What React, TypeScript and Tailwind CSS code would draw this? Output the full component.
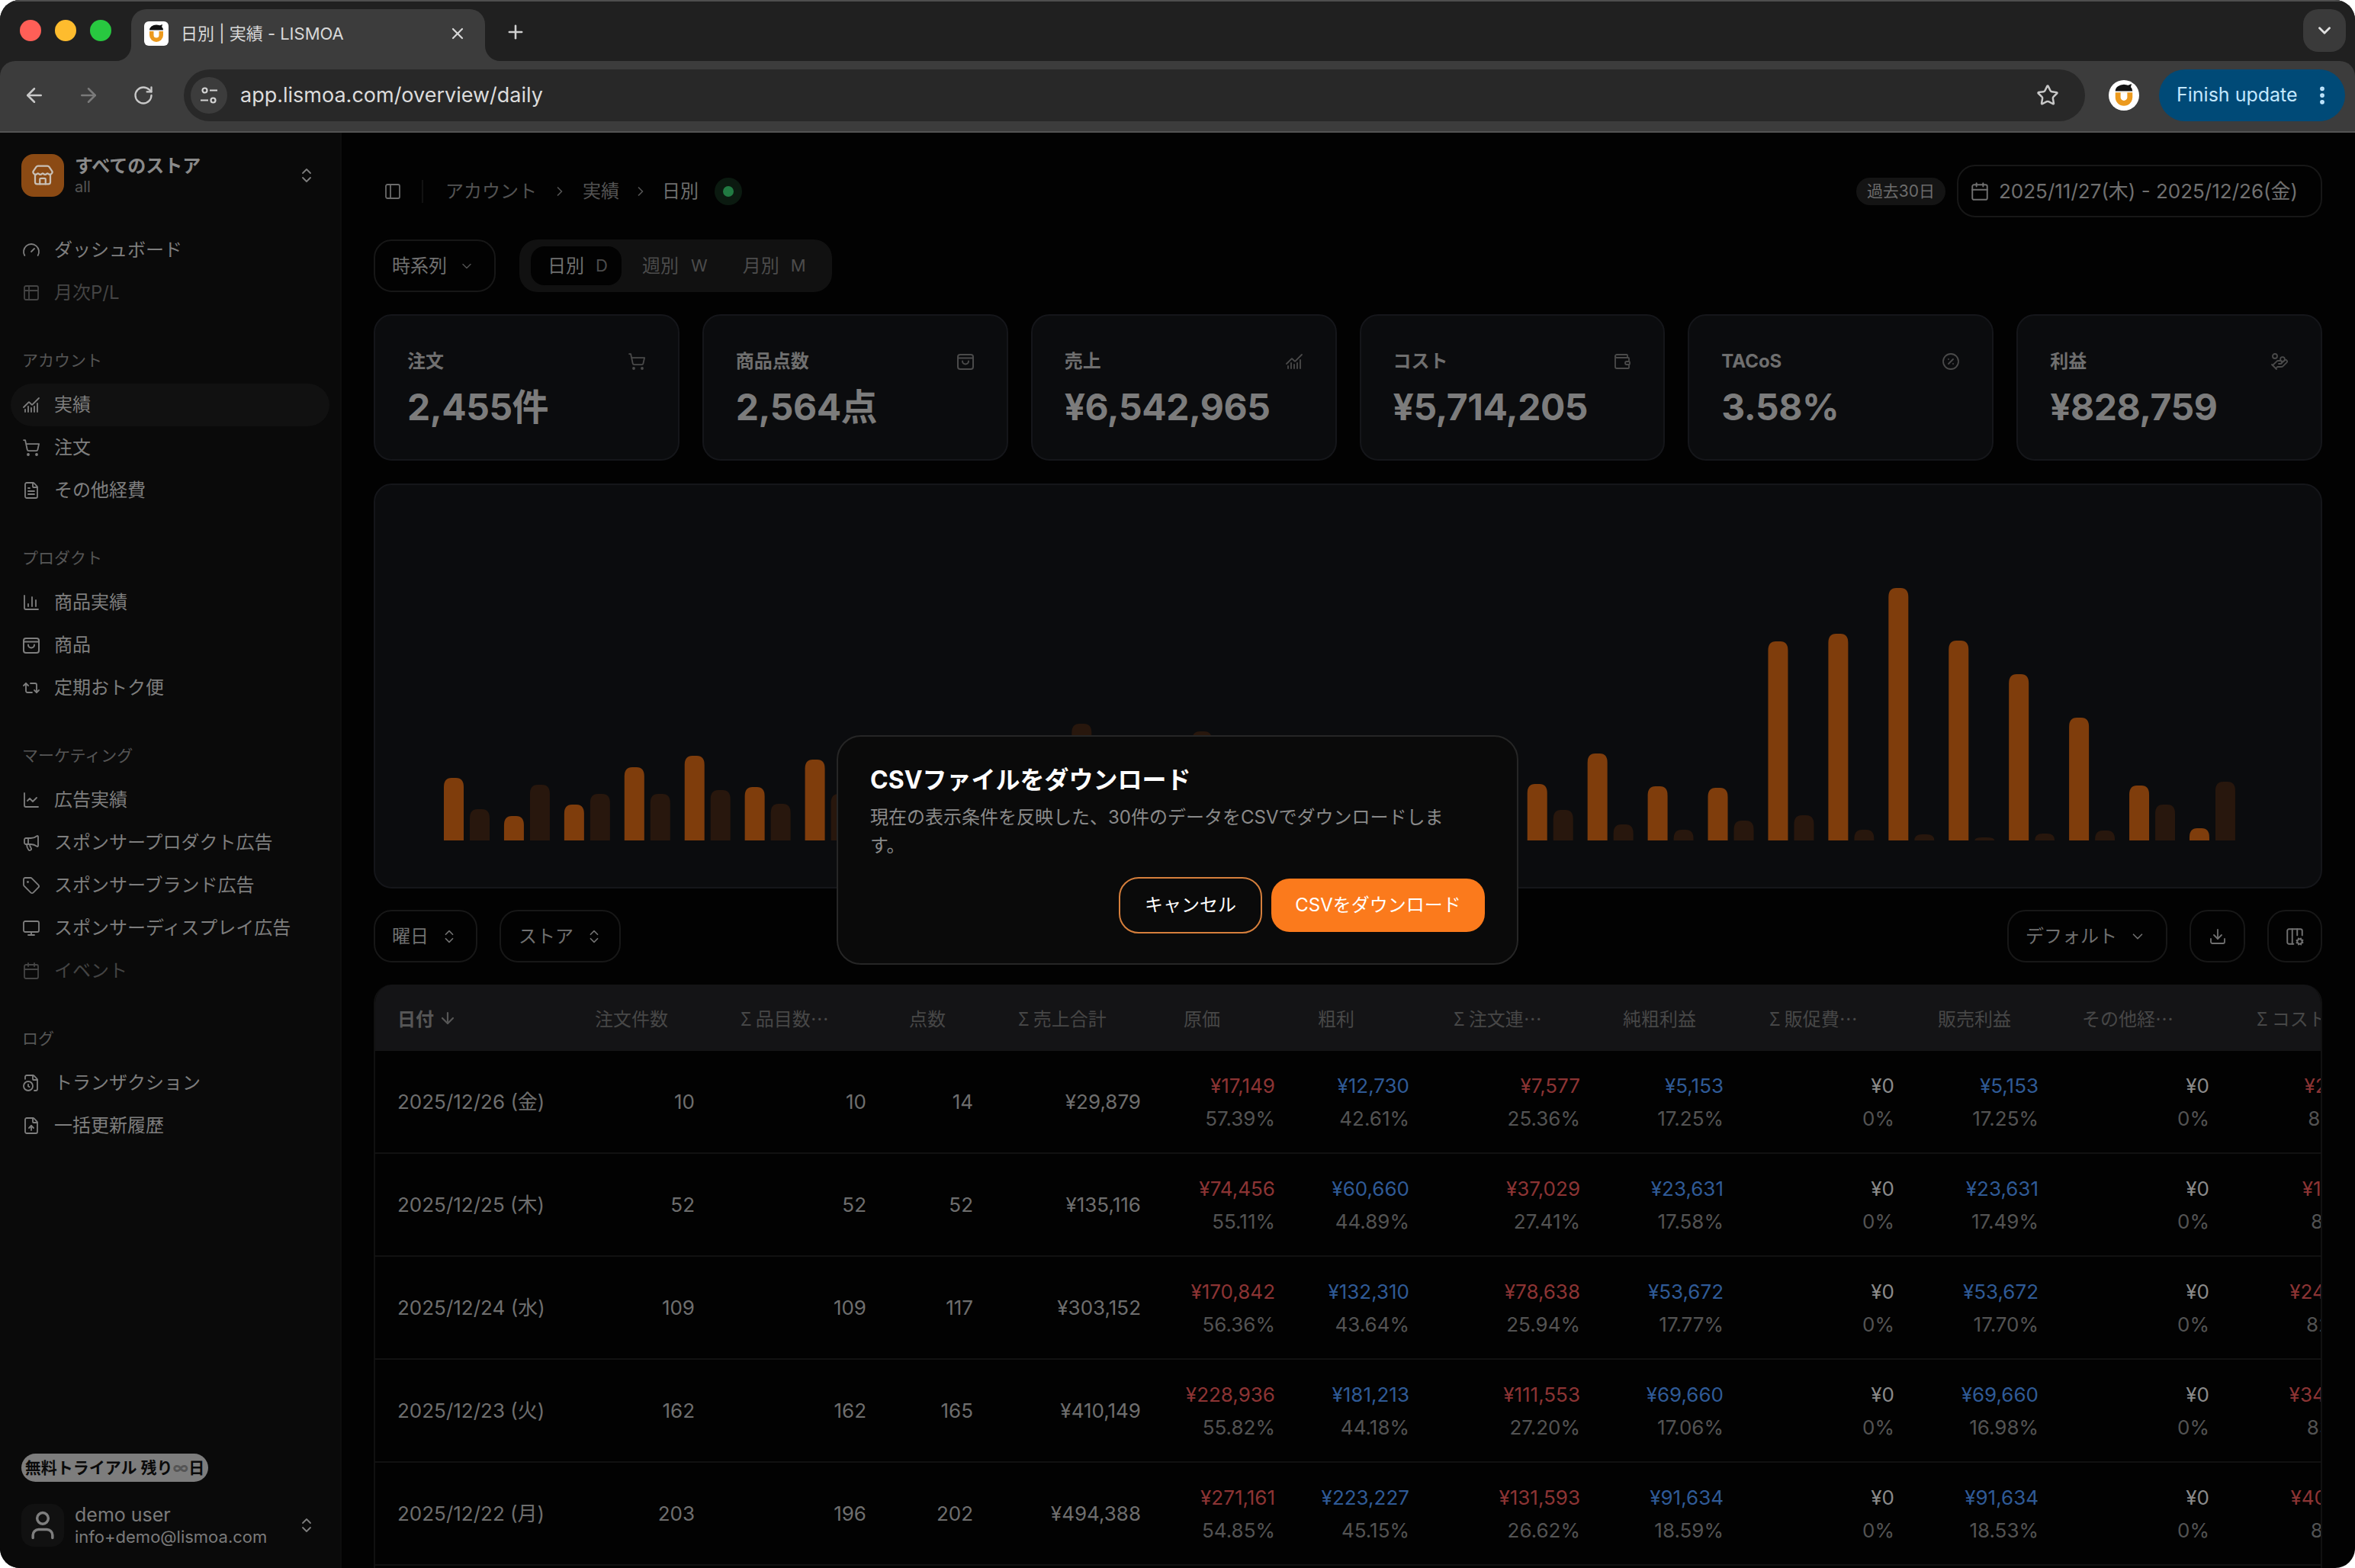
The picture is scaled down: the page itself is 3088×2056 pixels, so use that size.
import React from "react";
import {
  ArrowDown, ArrowLeft, ArrowRight, Calendar, ChartColumn, ChartLine, ChartNoAxesCombined, ChevronDown, ChevronRight,
  ChevronsUpDown, CirclePercent, Columns3Cog, Download, EllipsisVertical, FileClock, FileText, FileUp, Gauge, HandCoins,
  Megaphone, Monitor, PanelLeft, Plus, Repeat2, RotateCw, ShoppingCart, Star, Store, Table2, Tag, User, Wallet, X,
} from "lucide-react";

function BagIcon({ size = 24, className = "" }: { size?: number; className?: string }) {
  return (
    <svg width={size} height={size} viewBox="0 0 24 24" fill="none" stroke="currentColor" strokeWidth="2" strokeLinecap="round" strokeLinejoin="round" className={className}>
      <rect x="2" y="3" width="20" height="19" rx="3" />
      <path d="M2 7.5h20" />
      <path d="M8 11.5a4 4 0 0 0 8 0" />
    </svg>
  );
}

function Favicon({ size, round }: { size: number; round?: boolean }) {
  return (
    <svg width={size} height={size} viewBox="0 0 32 32" className="shrink-0">
      {round ? <circle cx="16" cy="16" r="16" fill="#fff" /> : <rect width="32" height="32" rx="6" fill="#fff" />}
      <path d="M7 11.5 A9 7 0 0 1 25 11.5 Z" fill="#111" />
      <path d="M19 6l5-2-1 4z" fill="#111" />
      <path d="M7 13h18v5a9 9 0 0 1-18 0z" fill="#ec9a1e" />
      <path d="M12.5 13h7v5a3.5 3.5 0 0 1-7 0z" fill="#fff" />
    </svg>
  );
}

function TabFlare({ side }: { side: "l" | "r" }) {
  return (
    <svg width="20" height="20" viewBox="0 0 20 20" className={side === "l" ? "absolute bottom-0 -left-[20px]" : "absolute bottom-0 -right-[20px]"}>
      <path d={side === "l" ? "M20 0V20H0A20 20 0 0 0 20 0Z" : "M0 0V20H20A20 20 0 0 1 0 0Z"} fill="#3c3c3c" />
    </svg>
  );
}

function BrowserChrome() {
  return (
    <div className="shrink-0 bg-[#202020] border-t-2 border-[#4e4e4e]">
      <div className="h-[78px] flex items-start relative">
        <div className="flex items-center gap-[18px] pl-[26px] pt-[24px]">
          <div className="w-[28px] h-[28px] rounded-full bg-[#ff5f57]" />
          <div className="w-[28px] h-[28px] rounded-full bg-[#febc2e]" />
          <div className="w-[28px] h-[28px] rounded-full bg-[#28c840]" />
        </div>
        <div className="relative ml-[26px] mt-[10px] w-[464px] h-[68px] rounded-t-[20px] bg-[#3c3c3c] flex items-center pl-[17px] pr-[24px] pb-[4px]">
          <TabFlare side="l" />
          <TabFlare side="r" />
          <Favicon size={32} />
          <span className="ml-[16px] text-[22px] text-[#d8d8d8] flex-1 whitespace-nowrap">日別 | 実績 - LISMOA</span>
          <X size={24} strokeWidth={2.2} className="text-[#d8d8d8]" />
        </div>
        <Plus size={28} strokeWidth={2.2} className="ml-[26px] mt-[26px] text-[#d0d0d0]" />
        <div className="ml-auto mr-[12px] mt-[10px] w-[56px] h-[56px] rounded-[20px] bg-[#3a3a3a] flex items-center justify-center">
          <ChevronDown size={26} strokeWidth={2.6} className="text-[#e0e0e0]" />
        </div>
      </div>
      <div className="h-[94px] rounded-t-[20px] bg-[#3c3c3c] border-b-2 border-[#545454] flex items-center pl-[30px] pr-[13px] pb-[2px]">
        <ArrowLeft size={30} strokeWidth={2} className="text-[#c8c8c8]" />
        <ArrowRight size={30} strokeWidth={2} className="ml-[41px] text-[#7a7a7a]" />
        <RotateCw size={28} strokeWidth={2} className="ml-[43px] text-[#c8c8c8]" />
        <div className="ml-[39px] flex-1 h-[68px] rounded-full bg-[#282828] flex items-center pl-[9px] pr-[34px]">
          <div className="w-[48px] h-[48px] rounded-full bg-[#3c3c3c] flex items-center justify-center">
            <svg width="26" height="26" viewBox="0 0 26 26" fill="none" stroke="#d4d4d4" strokeWidth="2.2">
              <circle cx="7.5" cy="6.5" r="3" />
              <path d="M14 6.5h10M2 19.5h10" />
              <circle cx="18.5" cy="19.5" r="3" />
            </svg>
          </div>
          <span className="ml-[17px] text-[27px] text-[#dcdcdc] flex-1">app.lismoa.com/overview/daily</span>
          <Star size={30} strokeWidth={2} className="text-[#c8c8c8]" />
        </div>
        <div className="ml-[31px]"><Favicon size={40} round /></div>
        <div className="ml-[26px] w-[244px] h-[68px] rounded-full bg-[#004a77] flex items-center pl-[23px] pr-[15px] justify-between">
          <span className="text-[25px] text-[#c2e7ff] whitespace-nowrap">Finish update</span>
          <EllipsisVertical size={30} strokeWidth={2.6} className="text-[#c2e7ff]" />
        </div>
      </div>
    </div>
  );
}

type NavItem = { label: string; icon: React.ReactNode; active?: boolean; disabled?: boolean };

function NavRow({ item }: { item: NavItem }) {
  return (
    <div className={
      "h-[56px] mx-[14px] rounded-full pl-[15px] flex items-center gap-[18px] text-[24px] whitespace-nowrap " +
      (item.active ? "bg-[#111111] " : "") + (item.disabled ? "text-[#444444]" : "text-[#7e7e7e]")
    }>
      {item.icon}
      <span>{item.label}</span>
    </div>
  );
}

function NavGroup({ title, items }: { title: string; items: NavItem[] }) {
  return (
    <div className="mt-[41px]">
      <div className="h-[40px] mb-[10px] pl-[29px] flex items-center text-[21px] text-[#565656]">{title}</div>
      {items.map((i) => <NavRow key={i.label} item={i} />)}
    </div>
  );
}

const ic = { size: 24, strokeWidth: 1.8 };

function Sidebar() {
  return (
    <aside className="w-[448px] shrink-0 bg-[#0a0a0a] border-r-2 border-[#0d0d0d] flex flex-col">
      <div className="mt-[28px] h-[56px] pl-[28px] pr-[32px] flex items-center">
        <div className="w-[56px] h-[56px] rounded-[16px] bg-[#8b4a14] flex items-center justify-center">
          <Store size={30} strokeWidth={1.8} className="text-[#c9c0b6]" />
        </div>
        <div className="ml-[14px] flex-1">
          <div className="text-[24px] leading-[30px] font-bold text-[#8a8a8a]">すべてのストア</div>
          <div className="text-[20px] leading-[24px] text-[#555555]">all</div>
        </div>
        <ChevronsUpDown size={24} strokeWidth={1.8} className="text-[#7e7e7e]" />
      </div>
      <div className="mt-[42px]">
        <NavRow item={{ label: "ダッシュボード", icon: <Gauge {...ic} /> }} />
        <NavRow item={{ label: "月次P/L", icon: <Table2 {...ic} />, disabled: true }} />
      </div>
      <NavGroup title="アカウント" items={[
        { label: "実績", icon: <ChartNoAxesCombined {...ic} />, active: true },
        { label: "注文", icon: <ShoppingCart {...ic} /> },
        { label: "その他経費", icon: <FileText {...ic} /> },
      ]} />
      <NavGroup title="プロダクト" items={[
        { label: "商品実績", icon: <ChartColumn {...ic} /> },
        { label: "商品", icon: <BagIcon /> },
        { label: "定期おトク便", icon: <Repeat2 {...ic} /> },
      ]} />
      <NavGroup title="マーケティング" items={[
        { label: "広告実績", icon: <ChartLine {...ic} /> },
        { label: "スポンサープロダクト広告", icon: <Megaphone {...ic} /> },
        { label: "スポンサーブランド広告", icon: <Tag {...ic} /> },
        { label: "スポンサーディスプレイ広告", icon: <Monitor {...ic} /> },
        { label: "イベント", icon: <Calendar {...ic} />, disabled: true },
      ]} />
      <NavGroup title="ログ" items={[
        { label: "トランザクション", icon: <FileClock {...ic} /> },
        { label: "一括更新履歴", icon: <FileUp {...ic} /> },
      ]} />
      <div className="mt-auto pb-[28px] pl-[28px] pr-[32px]">
        <div className="h-[37px] w-[245px] rounded-full bg-[#7d7d7d] flex items-center justify-center text-[21px] font-bold text-[#0a0a0a] whitespace-nowrap">
          無料トライアル 残り<span className="text-[#555555]">∞</span>日
        </div>
        <div className="mt-[29px] flex items-center h-[56px]">
          <div className="w-[56px] h-[56px] rounded-[16px] bg-[#111111] flex items-center justify-center">
            <User size={44} strokeWidth={1.9} className="text-[#7e7e7e]" />
          </div>
          <div className="ml-[14px] flex-1">
            <div className="text-[25px] leading-[29px] text-[#7a7a7a]">demo user</div>
            <div className="text-[22px] leading-[28px] text-[#7a7a7a]">info+demo@lismoa.com</div>
          </div>
          <ChevronsUpDown size={24} strokeWidth={1.8} className="text-[#7e7e7e]" />
        </div>
      </div>
    </aside>
  );
}

function PageHeader() {
  return (
    <div className="h-[69px] flex items-center justify-between">
      <div className="flex items-center pl-[13px] text-[24px] text-[#545454]">
        <PanelLeft size={24} strokeWidth={1.8} className="text-[#6a6a6a]" />
        <div className="ml-[26px] w-[2px] h-[30px] bg-[#121212]" />
        <span className="ml-[29px]">アカウント</span>
        <ChevronRight size={20} className="mx-[20px]" />
        <span>実績</span>
        <ChevronRight size={20} className="mx-[18px]" />
        <span className="text-[#707070]">日別</span>
        <div className="ml-[21px] w-[36px] h-[36px] rounded-full bg-[#0b1a10] flex items-center justify-center">
          <div className="w-[14px] h-[14px] rounded-full bg-[#217a42]" />
        </div>
      </div>
      <div className="flex items-center gap-[15px]">
        <div className="h-[36px] w-[117px] rounded-full bg-[#141414] flex items-center justify-center text-[21px] text-[#6c6c6c]">過去30日</div>
        <div className="h-[69px] w-[479px] rounded-[24px] border-2 border-[#171717] flex items-center pl-[15px] gap-[12px] text-[26px] text-[#707070] whitespace-nowrap">
          <Calendar size={26} strokeWidth={1.8} />
          2025/11/27(木) - 2025/12/26(金)
        </div>
      </div>
    </div>
  );
}

function ViewRow() {
  return (
    <div className="mt-[29px] h-[69px] flex items-center gap-[31px]">
      <div className="h-[69px] w-[160px] rounded-[24px] border-2 border-[#171717] flex items-center pl-[22px] gap-[16px] text-[24px] text-[#707070]">
        時系列 <ChevronDown size={20} strokeWidth={1.8} className="text-[#505050]" />
      </div>
      <div className="h-[69px] w-[410px] rounded-[24px] bg-[#111111] flex items-center pl-[15px] text-[24px] text-[#4c4c4c] whitespace-nowrap">
        <div className="h-[51px] w-[119px] rounded-[18px] bg-[#020202] flex items-center pl-[22px] text-[#707070]">
          日別<span className="ml-[15px] text-[22px] text-[#4c4c4c]">D</span>
        </div>
        <span className="ml-[27px]">週別</span><span className="ml-[16px] text-[22px]">W</span>
        <span className="ml-[46px]">月別</span><span className="ml-[15px] text-[22px]">M</span>
      </div>
    </div>
  );
}

const cards = [
  { label: "注文", value: "2,455件", icon: <ShoppingCart size={24} strokeWidth={1.8} /> },
  { label: "商品点数", value: "2,564点", icon: <BagIcon /> },
  { label: "売上", value: "¥6,542,965", icon: <ChartNoAxesCombined size={24} strokeWidth={1.8} /> },
  { label: "コスト", value: "¥5,714,205", icon: <Wallet size={24} strokeWidth={1.8} /> },
  { label: "TACoS", value: "3.58%", icon: <CirclePercent size={24} strokeWidth={1.8} /> },
  { label: "利益", value: "¥828,759", icon: <HandCoins size={24} strokeWidth={1.8} /> },
];

function StatCards() {
  return (
    <div className="mt-[29px] grid grid-cols-6 gap-[30px]">
      {cards.map((c) => (
        <div key={c.label} className="h-[192px] rounded-[24px] bg-[#0b0c0e] border-2 border-[#15161a] pl-[42px] pr-[42px] pt-[44px]">
          <div className="flex items-center justify-between h-[32px]">
            <span className="text-[24px] font-bold text-[#6f6f6f]">{c.label}</span>
            <span className="text-[#4a4a4a]">{c.icon}</span>
          </div>
          <div className="mt-[11px] text-[48px] leading-[66px] font-bold text-[#7c7c7c] whitespace-nowrap tracking-[-0.5px]">{c.value}</div>
        </div>
      ))}
    </div>
  );
}

const orange = [82, 32, 47, 96, 111, 70, 106, 80, 60, 95, 72, 55, 100, 66, 90, 58, 75, 85, 74, 114, 71, 69, 261, 271, 331, 262, 218, 161, 72, 16];
const dark = [41, 73, 61, 61, 66, 48, 61, 50, 90, 70, 153, 60, 143, 75, 40, 88, 60, 38, 40, 21, 14, 26, 33, 14, 8, 4, 9, 13, 47, 77];

function barPath(x: number, h: number) {
  const y = 466 - h;
  const r = Math.min(12, h);
  return `M${x} 466V${y + r}Q${x} ${y} ${x + 10} ${y}H${x + 16}Q${x + 26} ${y} ${x + 26} ${y + r}V466Z`;
}

function Chart() {
  return (
    <div className="mt-[30px] h-[531px] rounded-[24px] bg-[#0b0c0e] border-2 border-[#15161a] overflow-hidden">
      <svg width="2551" height="527" viewBox="0 0 2551 527" className="block">
        {orange.map((h, i) => <path key={"o" + i} d={barPath(90 + 78.93 * i, h)} fill="#7f3d0c" />)}
        {dark.map((h, i) => <path key={"d" + i} d={barPath(124 + 78.93 * i, h)} fill="#28170d" />)}
      </svg>
    </div>
  );
}

function FilterRow() {
  const box = "h-[69px] rounded-[24px] border-2 border-[#171717] flex items-center text-[24px] text-[#707070] whitespace-nowrap";
  return (
    <div className="mt-[28px] h-[69px] flex items-center">
      <div className={box + " w-[136px] pl-[22px] gap-[16px]"}>曜日 <ChevronsUpDown size={22} strokeWidth={1.8} /></div>
      <div className={box + " w-[159px] ml-[29px] pl-[23px] gap-[16px]"}>ストア <ChevronsUpDown size={22} strokeWidth={1.8} /></div>
      <div className={box + " w-[210px] ml-auto pl-[22px] gap-[16px]"}>デフォルト <ChevronDown size={22} strokeWidth={1.8} /></div>
      <div className={box + " w-[73px] ml-[29px] justify-center"}><Download size={24} strokeWidth={1.8} /></div>
      <div className={box + " w-[72px] ml-[29px] justify-center"}><Columns3Cog size={26} strokeWidth={1.8} /></div>
    </div>
  );
}

const gridCols = "grid grid-cols-[256px_187px_225px_140px_220px_176px_176px_224px_188px_224px_189px_224px_224px]";

const headers = [
  { t: "注文件数", c: "pl-[32px]" },
  { t: "Σ 品目数…", c: "pl-[36px]" },
  { t: "点数", c: "pl-[32px]" },
  { t: "Σ 売上合計", c: "pl-[35px]" },
  { t: "原価", c: "pl-[32px]" },
  { t: "粗利", c: "pl-[32px]" },
  { t: "Σ 注文連…", c: "pl-[34px]" },
  { t: "純粗利益", c: "pl-[32px]" },
  { t: "Σ 販促費…", c: "pl-[36px]" },
  { t: "販売利益", c: "pl-[33px]" },
  { t: "その他経…", c: "pl-[33px]" },
  { t: "Σ コスト", c: "pl-[38px]" },
];

type Row = { date: string; a: string; b: string; c: string; sales: string; pairs: [string, string][] };
const rows: Row[] = [
  { date: "2025/12/26 (金)", a: "10", b: "10", c: "14", sales: "¥29,879", pairs: [["¥17,149", "57.39%"], ["¥12,730", "42.61%"], ["¥7,577", "25.36%"], ["¥5,153", "17.25%"], ["¥0", "0%"], ["¥5,153", "17.25%"], ["¥0", "0%"], ["¥24,726", "82.75%"]] },
  { date: "2025/12/25 (木)", a: "52", b: "52", c: "52", sales: "¥135,116", pairs: [["¥74,456", "55.11%"], ["¥60,660", "44.89%"], ["¥37,029", "27.41%"], ["¥23,631", "17.58%"], ["¥0", "0%"], ["¥23,631", "17.49%"], ["¥0", "0%"], ["¥111,485", "82.51%"]] },
  { date: "2025/12/24 (水)", a: "109", b: "109", c: "117", sales: "¥303,152", pairs: [["¥170,842", "56.36%"], ["¥132,310", "43.64%"], ["¥78,638", "25.94%"], ["¥53,672", "17.77%"], ["¥0", "0%"], ["¥53,672", "17.70%"], ["¥0", "0%"], ["¥249,480", "82.29%"]] },
  { date: "2025/12/23 (火)", a: "162", b: "162", c: "165", sales: "¥410,149", pairs: [["¥228,936", "55.82%"], ["¥181,213", "44.18%"], ["¥111,553", "27.20%"], ["¥69,660", "17.06%"], ["¥0", "0%"], ["¥69,660", "16.98%"], ["¥0", "0%"], ["¥340,489", "83.02%"]] },
  { date: "2025/12/22 (月)", a: "203", b: "196", c: "202", sales: "¥494,388", pairs: [["¥271,161", "54.85%"], ["¥223,227", "45.15%"], ["¥131,593", "26.62%"], ["¥91,634", "18.59%"], ["¥0", "0%"], ["¥91,634", "18.53%"], ["¥0", "0%"], ["¥402,754", "81.47%"]] },
];
const pairColors = ["text-[#8c3434]", "text-[#2f5a96]", "text-[#8c3434]", "text-[#2f5a96]", "text-[#8a8a8a]", "text-[#2f5a96]", "text-[#8a8a8a]", "text-[#8c3434]"];

function DataTable() {
  return (
    <div className="mt-[29px] flex-1 min-h-0 overflow-hidden rounded-t-[24px] border-x-2 border-[#111111]">
      <div className={gridCols + " h-[87px] items-center bg-[#141416] text-[24px] text-[#474747] whitespace-nowrap font-['Noto_Sans_CJK_JP',sans-serif]"}>
        <div className="pl-[29px] font-semibold text-[#565656] flex items-center gap-[6px]">日付 <ArrowDown size={24} strokeWidth={2.2} /></div>
        {headers.map((h) => <div key={h.t} className={h.c}>{h.t}</div>)}
      </div>
      {rows.map((r) => (
        <div key={r.date} className={gridCols + " h-[135px] items-center border-b-2 border-[#111111] text-[26px] text-[#6e6e6e] whitespace-nowrap"}>
          <div className="pl-[29px]">{r.date}</div>
          <div className="text-right pr-[24px]">{r.a}</div>
          <div className="text-right pr-[24px]">{r.b}</div>
          <div className="text-right pr-[24px]">{r.c}</div>
          <div className="text-right pr-[24px]">{r.sales}</div>
          {r.pairs.map((p, i) => (
            <div key={i} className="text-right pr-[24px] leading-[43px]">
              <div className={pairColors[i]}>{p[0]}</div>
              <div className="text-[#535353]">{p[1]}</div>
            </div>
          ))}
        </div>
      ))}
    </div>
  );
}

function CsvDialog() {
  return (
    <div className="absolute left-[1097px] top-[964px] w-[894px] h-[301px] rounded-[32px] bg-[#0a0a0a] border-2 border-[#262626] px-[42px] pt-[35px]">
      <h2 className="text-[32px] leading-[44px] font-bold text-white">CSVファイルをダウンロード</h2>
      <p className="mt-[8px] max-w-[790px] text-[24px] leading-[37px] text-[#8a8a8a]">現在の表示条件を反映した、30件のデータをCSVでダウンロードします。</p>
      <div className="mt-[25px] flex justify-end items-center gap-[14px]">
        <button className="h-[70px] w-[184px] rounded-[24px] bg-[#0a0a0a] outline-2 outline-[#d67f3c] text-[24px] text-white">キャンセル</button>
        <button className="h-[70px] w-[280px] rounded-[24px] bg-[#fb7a1c] text-[24px] text-white">CSVをダウンロード</button>
      </div>
    </div>
  );
}

export default function App() {
  return (
    <div className="relative w-[3088px] h-[2056px] bg-white overflow-hidden font-['Inter','Noto_Sans_CJK_JP',sans-serif]">
      <div className="w-full h-full rounded-[26px] overflow-hidden flex flex-col bg-[#020202]">
        <BrowserChrome />
        <div className="flex-1 min-h-0 flex">
          <Sidebar />
          <main className="flex-1 min-w-0 pl-[42px] pr-[43px] pt-[42px] flex flex-col">
            <PageHeader />
            <ViewRow />
            <StatCards />
            <Chart />
            <FilterRow />
            <DataTable />
          </main>
        </div>
      </div>
      <CsvDialog />
    </div>
  );
}
